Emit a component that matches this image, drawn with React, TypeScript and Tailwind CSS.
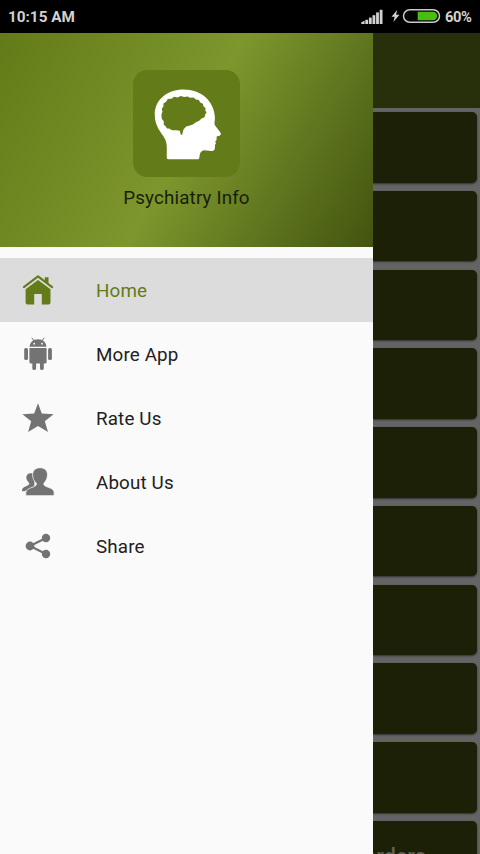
import React from "react";

function StatusBar() {
  return (
    <header className="flex h-[33px] shrink-0 items-center justify-between bg-black pl-2 pr-2 pt-0.5 text-[15.3px] font-bold text-[#d2d2d2]">
      <span className="w-[67px] whitespace-nowrap">10:15 AM</span>
      <div className="flex items-center">
        <svg width="22" height="16" viewBox="0 0 22 16" fill="#d2d2d2">
          <path d="M0.3 15V13.2L3.6 11.8V15Z" />
          <rect x="4.3" y="10.8" width="2.8" height="4.2" />
          <rect x="7.9" y="8.6" width="2.8" height="6.4" />
          <rect x="11.5" y="6.2" width="2.8" height="8.8" />
          <rect x="15.1" y="3.4" width="2.8" height="11.6" />
          <rect x="18.7" y="0.8" width="2.8" height="14.2" />
        </svg>
        <svg className="mb-0.5 ml-2" width="9" height="14" viewBox="0 0 9 14" fill="#d2d2d2">
          <path d="M6.2 1 0.5 7.8H3.7L2.3 13 8.5 5.7H5.1Z" />
        </svg>
        <svg className="ml-0.5" width="40" height="16" viewBox="0 0 40 16">
          <rect x="1.5" y="0.8" width="36" height="12.4" rx="6.2" fill="#050505" stroke="#c8c8c8" strokeWidth="1.5" />
          <path d="M15.7 2.8H31a4.2 4.2 0 0 1 0 8.4H15.7Z" fill="#49bd13" />
        </svg>
        <span className="ml-[3px] w-[27px] whitespace-nowrap text-[14.7px] tracking-[-0.4px]">60%</span>
      </div>
    </header>
  );
}

function Logo() {
  return (
    <svg width="107" height="107" viewBox="40 31 320 320">
      <rect x="40" y="31" width="320" height="320" rx="43" fill="#637b18" />
      <path
        fill="#fff"
        d="M145 298Q141 298 141 293V262C141 241 134 234 123 218C111 201 105 185 105 164C105 119 143 89 192 89C244 89 283 124 285 172C285 185 282 190 286 198L302 219Q305 225 299 228L290 230V240L286 245L288 251L285 255V264Q284 274 274 273L253 271C243 272 240 280 239 290Q239 298 234 298Z"
      />
      <path
        fill="#637b18"
        d="M125 165L128 155L126 147L131 140L131 131L139 126L144 118L155 117L163 111L173 113L183 109L193 112L203 110L211 114L221 113L228 119L237 121L241 128L249 132L251 140L257 145L256 152L260 157L256 164L254 172L245 176L238 183L228 187L219 194L208 198L199 200L191 209L187 225H183L180 213L170 211L157 211L148 206L142 206L136 198L132 195L132 184L126 177Z"
      />
    </svg>
  );
}

const homeIcon = (
  <svg width="32" height="32" viewBox="0 0 32 32" fill="#637b18">
    <path d="M1.9 13.2 16 2.4 30.1 13.2" fill="none" stroke="#637b18" strokeWidth="2.1" strokeLinecap="round" strokeLinejoin="round" />
    <path d="M22.8 3.2H26.5V9.6L22.8 6.8Z" />
    <path d="M3.6 15.2 16 6.1 28.5 15.2V28.4Q28.5 30.4 26.5 30.4H19.8V20H12.2V30.4H5.6Q3.6 30.4 3.6 28.4Z" />
  </svg>
);

const androidIcon = (
  <svg width="32" height="34" viewBox="0 0 32 34" fill="#737373">
    <path d="M7.6 9.7C7.9 5.4 11 2.3 16 2.3S24.1 5.4 24.4 9.7Z" />
    <path d="m9.8.8 2.5 3.5M22.2.8l-2.5 3.5" stroke="#737373" strokeWidth="1" />
    <circle cx="12.2" cy="6.7" r=".9" fill="#fafafa" />
    <circle cx="20" cy="6.7" r=".9" fill="#fafafa" />
    <path d="M7.4 10.9H24.6V25Q24.6 26.5 23 26.5H21.8V31.2A1.9 1.9 0 0 1 18 31.2V26.5H14.1V31.2A1.9 1.9 0 0 1 10.3 31.2V26.5H9Q7.4 26.5 7.4 25Z" />
    <rect x="2.2" y="11" width="3.8" height="12.1" rx="1.6" />
    <rect x="26.1" y="11" width="3.8" height="12.1" rx="1.6" />
  </svg>
);

const starIcon = (
  <svg width="32" height="30" viewBox="0 0 32 30" fill="#737373">
    <path d="M16 .3 19.8 10.5 31.6 11.2 22.8 18.2 26 29.1 16 22.9 6.1 29.1 9.2 18.2 .4 11.2 12.2 10.5Z" />
  </svg>
);

const peopleIcon = (
  <svg width="34" height="30" viewBox="0 0 34 30" fill="#737373">
    <path d="M1 24.2C.8 20.5 4.4 19.9 7.4 18.1 8.8 17.3 8.3 16.1 7.3 15.1 5.3 12.8 4.6 10.3 6 8.1 7.4 5.9 11.5 5.7 13.5 8L13.3 19.5 6 23.2Q3.2 24.5 1 24.2Z" />
    <path
      d="M19 .7C23.7.7 26.6 3.6 26.5 7.7 26.4 11.5 24.8 14.2 23 16.1 22.2 18.2 24 19 26.5 20 30.2 21.3 33.2 22.5 33.1 25.8V28.7H4.8V25.8C4.8 22.5 8.7 21.2 12 20 14.7 19 15.9 18.2 15.2 16.1 13 14.1 11.7 11.5 11.6 7.7 11.5 3.6 14.4.7 19 .7Z"
      stroke="#fafafa"
      strokeWidth=".8"
    />
  </svg>
);

const shareIcon = (
  <svg width="26" height="26" viewBox="0 0 26 26" fill="#737373">
    <path d="M21 5 5 13 21 21" fill="none" stroke="#737373" strokeWidth="2.2" />
    <circle cx="21" cy="5" r="4.2" />
    <circle cx="5" cy="13" r="4.4" />
    <circle cx="21" cy="21" r="4.2" />
  </svg>
);

const items = [
  { label: "Home", icon: homeIcon },
  { label: "More App", icon: androidIcon },
  { label: "Rate Us", icon: starIcon },
  { label: "About Us", icon: peopleIcon },
  { label: "Share", icon: shareIcon },
];

function Drawer() {
  return (
    <aside className="flex w-[373px] shrink-0 flex-col bg-[#fafafa]">
      <div className="flex h-[214px] shrink-0 flex-col items-center bg-[linear-gradient(119.7deg,#627b18_0%,#7d972d_50%,#425410_100%)] pt-[37px]">
        <Logo />
        <p className="mt-2 whitespace-nowrap text-[18.8px] leading-[26px] tracking-[0.15px] text-[#171e07]">Psychiatry Info</p>
      </div>
      <nav className="mt-[10.5px]">
        {items.map((item, i) => (
          <a key={item.label} className={i === 0 ? "flex h-16 items-center bg-[#dcdcdc] text-[#637b18]" : "flex h-16 items-center text-[#212121]"}>
            <span className="ml-[20.5px] flex w-[34px] shrink-0 justify-center">{item.icon}</span>
            <span className="ml-[41.5px] whitespace-nowrap pt-[3px] text-[18.8px] tracking-[0.15px]">{item.label}</span>
          </a>
        ))}
      </nav>
    </aside>
  );
}

function DimmedPage() {
  return (
    <main className="min-w-0 flex-1 overflow-hidden bg-[#646464]">
      <div className="h-[75px] bg-[#282f0b]" />
      <div className="mt-1 flex flex-col gap-[8.25px] pr-[3px]">
        {Array.from({ length: 10 }, (_, i) => (
          <div key={i} className="h-[70.5px] shrink-0 overflow-hidden rounded-r-[5px] bg-[#1b2006] shadow-[0_1px_2px_#303030]">
            {i === 9 && <p className="mt-[22px] flex w-[53px] justify-end whitespace-nowrap text-[21.5px] font-medium leading-7 text-[#606157]">Disorders</p>}
          </div>
        ))}
      </div>
    </main>
  );
}

export default function App() {
  return (
    <div className="flex h-[854px] w-[480px] flex-col overflow-hidden bg-black font-['Roboto',sans-serif]">
      <StatusBar />
      <div className="flex min-h-0 flex-1">
        <Drawer />
        <DimmedPage />
      </div>
    </div>
  );
}
